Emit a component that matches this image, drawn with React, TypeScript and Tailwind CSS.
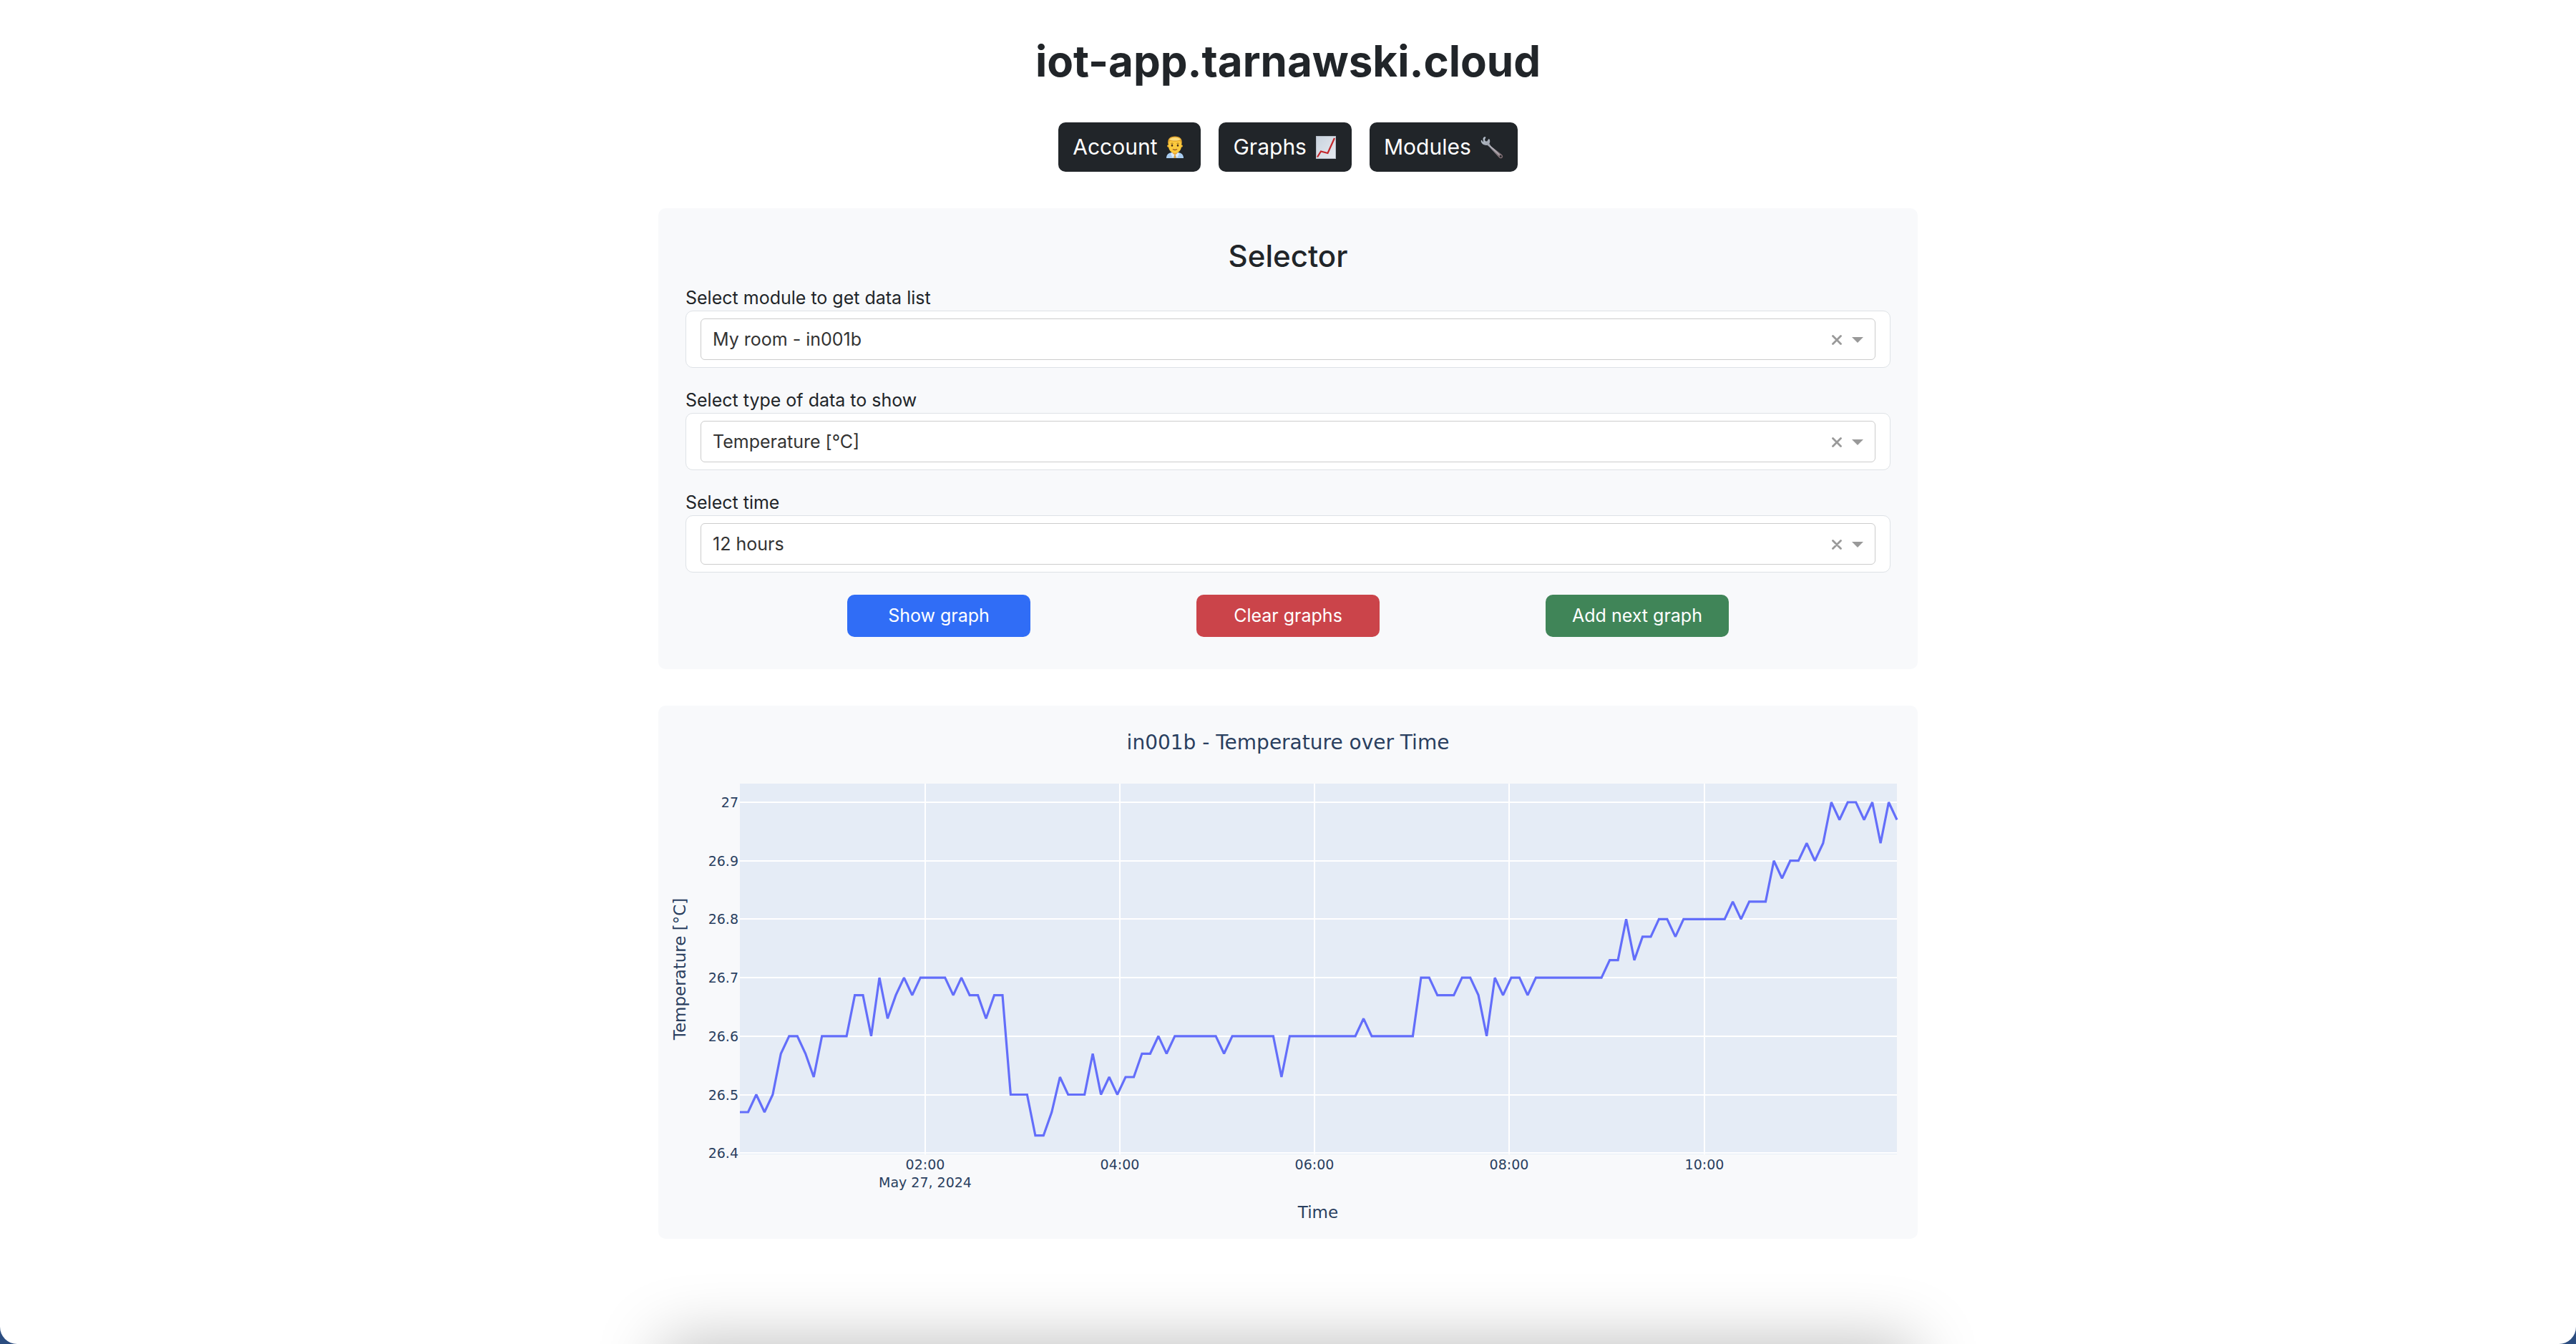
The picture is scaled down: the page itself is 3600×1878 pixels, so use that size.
import { useState } from "react";

type Option = string;

const TEMPERATURES = [
  26.47, 26.47, 26.5, 26.47, 26.5, 26.57, 26.6, 26.6, 26.57, 26.53, 26.6, 26.6, 26.6, 26.6, 26.67, 26.67,
  26.6, 26.7, 26.63, 26.67, 26.7, 26.67, 26.7, 26.7, 26.7, 26.7, 26.67, 26.7, 26.67, 26.67, 26.63, 26.67,
  26.67, 26.5, 26.5, 26.5, 26.43, 26.43, 26.47, 26.53, 26.5, 26.5, 26.5, 26.57, 26.5, 26.53, 26.5, 26.53,
  26.53, 26.57, 26.57, 26.6, 26.57, 26.6, 26.6, 26.6, 26.6, 26.6, 26.6, 26.57, 26.6, 26.6, 26.6, 26.6,
  26.6, 26.6, 26.53, 26.6, 26.6, 26.6, 26.6, 26.6, 26.6, 26.6, 26.6, 26.6, 26.63, 26.6, 26.6, 26.6,
  26.6, 26.6, 26.6, 26.7, 26.7, 26.67, 26.67, 26.67, 26.7, 26.7, 26.67, 26.6, 26.7, 26.67, 26.7, 26.7,
  26.67, 26.7, 26.7, 26.7, 26.7, 26.7, 26.7, 26.7, 26.7, 26.7, 26.73, 26.73, 26.8, 26.73, 26.77, 26.77,
  26.8, 26.8, 26.77, 26.8, 26.8, 26.8, 26.8, 26.8, 26.8, 26.83, 26.8, 26.83, 26.83, 26.83, 26.9, 26.87,
  26.9, 26.9, 26.93, 26.9, 26.93, 27, 26.97, 27, 27, 26.97, 27, 26.93, 27, 26.97,
];

const PLOT = { left: 114, right: 1731, top: 109, bottom: 627 };
const Y_TICKS = [27, 26.9, 26.8, 26.7, 26.6, 26.5, 26.4];
const X_TICKS = [
  { label: "02:00", x: 373 },
  { label: "04:00", x: 645 },
  { label: "06:00", x: 917 },
  { label: "08:00", x: 1189 },
  { label: "10:00", x: 1462 },
];

const yOf = (value: number) => 135 + (27 - value) * 817;
const xOf = (index: number) =>
  PLOT.left + (index * (PLOT.right - PLOT.left)) / (TEMPERATURES.length - 1);

const LINE = TEMPERATURES.map((t, i) => `${xOf(i).toFixed(1)},${yOf(t).toFixed(1)}`).join(" ");

function TemperatureChart() {
  return (
    <svg
      viewBox="0 0 1760 745"
      className="block w-full font-['DejaVu_Sans',Verdana,sans-serif]"
      fill="#2a3f5f"
      role="img"
      aria-label="in001b - Temperature over Time"
    >
      <text x="880" y="61" fontSize="28" textAnchor="middle">
        in001b - Temperature over Time
      </text>
      <rect
        x={PLOT.left}
        y={PLOT.top}
        width={PLOT.right - PLOT.left}
        height={PLOT.bottom - PLOT.top}
        fill="#e5ecf6"
      />
      <g stroke="#fff" strokeWidth="2">
        {X_TICKS.map((t) => (
          <line key={t.label} x1={t.x} x2={t.x} y1={PLOT.top} y2={PLOT.bottom} />
        ))}
        {Y_TICKS.map((v) => (
          <line key={v} x1={PLOT.left} x2={PLOT.right} y1={Math.round(yOf(v))} y2={Math.round(yOf(v))} />
        ))}
      </g>
      <polyline points={LINE} fill="none" stroke="#636efa" strokeWidth="3.2" strokeMiterlimit="2" />
      <g fontSize="19" textAnchor="end">
        {Y_TICKS.map((v) => (
          <text key={v} x="112" y={Math.round(yOf(v)) + 7}>
            {v}
          </text>
        ))}
      </g>
      <g fontSize="19" textAnchor="middle">
        {X_TICKS.map((t) => (
          <text key={t.label} x={t.x} y="648">
            {t.label}
          </text>
        ))}
        <text x="373" y="673">
          May 27, 2024
        </text>
      </g>
      <text x="922" y="716" fontSize="23" textAnchor="middle">
        Time
      </text>
      <text x="38" y="368" fontSize="23" textAnchor="middle" transform="rotate(-90 38 368)">
        Temperature [°C]
      </text>
    </svg>
  );
}

function OfficeWorkerIcon() {
  return (
    <svg viewBox="0 0 24 32" className="h-8 w-6" aria-hidden="true">
      <path d="M0 31c0-5 3-7.500 8-8h8c5 .5 8 3 8 8z" fill="#a9cdf0" />
      <path d="M8 22.500h8l-1 3-3 2.500-3-2.500z" fill="#e9a53a" />
      <path d="M8 23.500l4 3.500-3 3.500-3-5.500zM16 23.500l-4 3.500 3 3.500 3-5.500z" fill="#dcecfb" />
      <path d="M11 27h2l.7 4h-3.400z" fill="#d9a441" />
      <circle cx="2.800" cy="14" r="1.700" fill="#f2b42f" />
      <circle cx="21.200" cy="14" r="1.700" fill="#f2b42f" />
      <path d="M3 9c0-6 4-8 9-8s9 2 9 8v5c0 6-4 10-9 10s-9-4-9-10z" fill="#fbc93d" />
      <path d="M2.500 12C1 4 5 .5 12 .5S23 4 21.500 12c-1-3-1.500-4.500-3-5-4 1-9 1-13 0-1.500.5-2 2-3 5z" fill="#e3a52c" />
      <path d="M4 5c3-4 13-4 16 0-5 2-11 2-16 0z" fill="#fbdc7c" />
      <path d="M6.500 10.500q1.500-1 3 0M14.500 10.500q1.500-1 3 0" stroke="#a8711c" fill="none" />
      <ellipse cx="8" cy="13.200" rx="1.200" ry="1.600" fill="#4a2f18" />
      <ellipse cx="16" cy="13.200" rx="1.200" ry="1.600" fill="#4a2f18" />
      <path d="M9 18.500q3 2 6 0" stroke="#8a4a1c" strokeWidth="1.400" fill="none" />
    </svg>
  );
}

function ChartIcon() {
  return (
    <svg viewBox="0 0 28 32" className="h-8 w-7" aria-hidden="true">
      <defs>
        <linearGradient id="paper" x1="0" y1="0" x2="1" y2="1">
          <stop offset="0" stopColor="#c9d3de" />
          <stop offset="1" stopColor="#e6eaf0" />
        </linearGradient>
      </defs>
      <rect x=".5" y=".5" width="27" height="31" fill="url(#paper)" stroke="#b4bcc6" />
      <path d="M2 29.500l5-8 9.500 2.500L26 3" fill="none" stroke="#c3272b" strokeWidth="2.200" />
    </svg>
  );
}

function WrenchIcon() {
  return (
    <svg viewBox="0 0 32 32" className="size-8" aria-hidden="true">
      <defs>
        <linearGradient id="steel" x1="0" y1="0" x2="1" y2="1">
          <stop offset="0" stopColor="#b9c6d2" />
          <stop offset=".45" stopColor="#9a9ca6" />
          <stop offset="1" stopColor="#7a6468" />
        </linearGradient>
      </defs>
      <path
        d="M5 1.500C6.500 1 7.500 1.300 7.300 2.200L6 5l.8 2.200 2.400.4L11 4.600c.7-.9 1.800-.3 2 1 .5 2 .3 3.800-.6 5.200l2.200 3.500L29.800 26c1.800 1.500 1.800 3.300.6 4.500s-3.400 1.200-4.600-.4L12.600 15.500 9.500 12.700C6 13.500 2 11.500 1 8.500.6 7.200.6 6 1.300 5.700 2.300 5.400 2.700 8 4 8.500L3.700 5.500c-.5-1.500 0-3.500 1.300-4z"
        fill="url(#steel)"
      />
      <path d="M13 13.500L26.500 26.500" stroke="#d3cdd2" strokeWidth="1" />
      <circle cx="28.200" cy="28.400" r="1.400" fill="#212529" />
    </svg>
  );
}

const NAV = [
  { label: "Account", Icon: OfficeWorkerIcon, pad: "pr-6" },
  { label: "Graphs", Icon: ChartIcon, pad: "pr-[22px]" },
  { label: "Modules", Icon: WrenchIcon, pad: "pr-5" },
];

function Dropdown({ id, label, options }: { id: string; label: string; options: Option[] }) {
  const [value, setValue] = useState(options[0]);
  return (
    <div>
      <label htmlFor={id} className="block pt-[2px] text-[25px] leading-9">
        {label}
      </label>
      <div className="rounded-[10px] border border-[#dee2e6] bg-white px-5 py-[10px]">
        <div className="relative rounded-[6px] border border-[#ccc]">
          <select
            id={id}
            value={value}
            onChange={(e) => setValue(e.target.value)}
            className="block h-14 w-full appearance-none bg-transparent px-4 pt-[2px] text-[25px] text-[#333] outline-none"
          >
            <option value="" />
            {options.map((o) => (
              <option key={o}>{o}</option>
            ))}
          </select>
          <div className="pointer-events-none absolute inset-y-0 right-4 flex items-center gap-[14px] pt-[2px] text-[#999]">
            <button type="button" aria-label={`Clear: ${label}`} onClick={() => setValue("")} className="pointer-events-auto">
              <svg viewBox="0 0 14 14" className="size-[14px]" aria-hidden="true">
                <path d="M1.500 1.500l11 11M12.500 1.500l-11 11" stroke="currentColor" strokeWidth="2.800" strokeLinecap="round" />
              </svg>
            </button>
            <svg viewBox="0 0 16 8" className="h-2 w-4" aria-hidden="true">
              <path d="M0 0h16L8 8z" fill="currentColor" />
            </svg>
          </div>
        </div>
      </div>
    </div>
  );
}

const ACTION = "h-[59px] w-64 rounded-[10px] text-[25px] text-white";

export default function App() {
  return (
    <div className="bg-[#2b4d80]">
      <div className="relative min-h-screen overflow-hidden rounded-b-[24px] bg-white px-6 pb-16 font-[Inter,sans-serif] text-[#212529]">
        <header className="flex flex-col items-center pt-[47px]">
          <h1 className="text-[60px] leading-[76px] font-bold">iot-app.tarnawski.cloud</h1>
          <nav className="mt-12 flex gap-[25px]">
            {NAV.map(({ label, Icon, pad }) => (
              <button
                key={label}
                type="button"
                className={`flex h-[69px] items-center gap-[13px] rounded-[10px] bg-[#212529] pl-5 text-[30px] text-white ${pad}`}
              >
                {label}
                <Icon />
              </button>
            ))}
          </nav>
        </header>

        <main className="mx-auto mt-[51px] flex w-full max-w-[1760px] flex-col gap-[51px]">
          <section className="rounded-[10px] bg-[#f8f9fb] px-[38px] pt-[38px] pb-[45px]">
            <h2 className="text-center text-[42px] leading-[58px] font-medium">Selector</h2>
            <div className="mt-[9px] flex flex-col gap-[25px]">
              <Dropdown id="module" label="Select module to get data list" options={["My room - in001b"]} />
              <Dropdown id="type" label="Select type of data to show" options={["Temperature [°C]"]} />
              <Dropdown id="time" label="Select time" options={["12 hours"]} />
            </div>
            <div className="mt-[31px] flex flex-wrap justify-center gap-x-[232px] gap-y-4">
              <button type="button" className={`${ACTION} bg-[#306df6]`}>
                Show graph
              </button>
              <button type="button" className={`${ACTION} bg-[#cb444a]`}>
                Clear graphs
              </button>
              <button type="button" className={`${ACTION} bg-[#408558]`}>
                Add next graph
              </button>
            </div>
          </section>

          <section className="rounded-[10px] bg-[#f8f9fb]">
            <TemperatureChart />
          </section>
        </main>

        <div className="pointer-events-none absolute inset-x-0 top-full">
          <div className="mx-auto h-64 w-full max-w-[1750px] shadow-[0_-4px_90px_rgba(0,0,0,0.25)]" />
        </div>
      </div>
    </div>
  );
}
